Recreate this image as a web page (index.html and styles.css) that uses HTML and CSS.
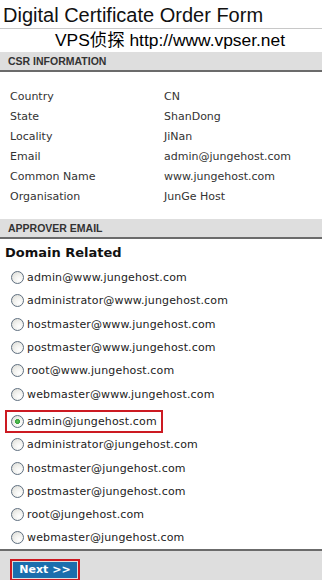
FILE: index.html
```html
<!DOCTYPE html>
<html lang="en">
<head>
  <meta charset="UTF-8">
  <meta name="viewport" content="width=device-width, initial-scale=1">
  <title>Digital Certificate Order Form</title>
  <link rel="stylesheet" href="styles.css">
</head>
<body>
  <div class="page">
    <h1 class="title">Digital Certificate Order Form</h1>
    <div class="watermark">VPS侦探 http://www.vpser.net</div>

    <div class="section-head">CSR INFORMATION</div>
    <table class="csr">
      <tr><td>Country</td><td>CN</td></tr>
      <tr><td>State</td><td>ShanDong</td></tr>
      <tr><td>Locality</td><td>JiNan</td></tr>
      <tr><td>Email</td><td>admin@jungehost.com</td></tr>
      <tr><td>Common Name</td><td>www.jungehost.com</td></tr>
      <tr><td>Organisation</td><td>JunGe Host</td></tr>
    </table>

    <div class="section-head">APPROVER EMAIL</div>
    <h3 class="group-title">Domain Related</h3>
    <div class="approvers">
      <label class="opt"><input type="radio" name="approver"> admin@www.jungehost.com</label>
      <label class="opt"><input type="radio" name="approver"> administrator@www.jungehost.com</label>
      <label class="opt"><input type="radio" name="approver"> hostmaster@www.jungehost.com</label>
      <label class="opt"><input type="radio" name="approver"> postmaster@www.jungehost.com</label>
      <label class="opt"><input type="radio" name="approver"> root@www.jungehost.com</label>
      <label class="opt"><input type="radio" name="approver"> webmaster@www.jungehost.com</label>
      <label class="opt selected"><span class="mark"><input type="radio" name="approver" checked> admin@jungehost.com</span></label>
      <label class="opt"><input type="radio" name="approver"> administrator@jungehost.com</label>
      <label class="opt"><input type="radio" name="approver"> hostmaster@jungehost.com</label>
      <label class="opt"><input type="radio" name="approver"> postmaster@jungehost.com</label>
      <label class="opt"><input type="radio" name="approver"> root@jungehost.com</label>
      <label class="opt"><input type="radio" name="approver"> webmaster@jungehost.com</label>
    </div>

    <div class="footer">
      <span class="mark btn-mark"><button class="next">Next &gt;&gt;</button></span>
    </div>
  </div>
</body>
</html>
```

FILE: styles.css
```css
body {
  margin: 0;
  background: #fff;
  font-family: "DejaVu Sans", Verdana, sans-serif;
  color: #222;
}
.page {
  width: 322px;
  height: 580px;
  overflow: hidden;
}
.title {
  margin: 0;
  padding: 4px 0 0 3px;
  height: 24px;
  font-family: "Liberation Sans", Arial, sans-serif;
  font-weight: normal;
  font-size: 20px;
  line-height: 22px;
  color: #111;
  border-bottom: 1px solid #c8c8c8;
}
.watermark {
  padding-left: 55px;
  height: 23px;
  font-family: "Liberation Sans", "Noto Sans CJK SC", sans-serif;
  font-size: 17.4px;
  line-height: 23px;
  color: #000;
}
.section-head {
  height: 18px;
  padding-left: 8px;
  background: #dedede;
  border-bottom: 2px solid #6b6b6b;
  font-family: "Liberation Sans", Arial, sans-serif;
  font-weight: bold;
  font-size: 10.5px;
  line-height: 18px;
  color: #333;
}
.csr {
  border-collapse: collapse;
  margin: 15px 0 12px 0;
  font-size: 11px;
  color: #333;
}
.csr td {
  height: 20px;
  padding: 0 0 0 10px;
  line-height: 20px;
}
.csr td:first-child {
  width: 144px;
}
.group-title {
  margin: 0;
  padding: 5px 0 0 5px;
  height: 22px;
  font-size: 13px;
  line-height: 18px;
  color: #111;
}
.approvers {
  display: flex;
  flex-direction: column;
}
.opt {
  display: flex;
  align-items: center;
  height: 23.3px;
  padding-left: 11px;
  font-size: 11px;
  letter-spacing: 0.15px;
  color: #222;
}
.opt input {
  appearance: none;
  -webkit-appearance: none;
  box-sizing: border-box;
  margin: 0 3px 0 0;
  width: 13px;
  height: 13px;
  border: 1px solid #5f6f80;
  border-radius: 50%;
  background: radial-gradient(circle at 65% 70%, #fff 0, #f1f1ee 45%, #d8d8d2 100%);
}
.opt input:checked {
  background:
    radial-gradient(circle, #5ec45a 0, #35a33a 2.2px, transparent 2.8px),
    radial-gradient(circle at 65% 70%, #fff 0, #f1f1ee 45%, #d8d8d2 100%);
}
.opt.selected {
  padding-left: 5px;
  margin-top: 4px;
}
.mark {
  display: inline-flex;
  align-items: center;
  border: 2px solid #cc1a22;
}
.opt.selected .mark {
  height: 19px;
  padding: 0 4px 0 4px;
}
.footer {
  margin-top: -1px;
  height: 40px;
  background: #dedede;
  border-top: 2px solid #6b6b6b;
  padding: 7px 0 0 10px;
  box-sizing: border-box;
}
.btn-mark {
  padding: 1px;
}
.next {
  border: none;
  background: #1b6ead;
  color: #fff;
  font-family: "DejaVu Sans", Verdana, sans-serif;
  font-weight: bold;
  font-size: 11px;
  width: 64px;
  height: 16px;
  padding: 0;
  line-height: 16px;
}
```
